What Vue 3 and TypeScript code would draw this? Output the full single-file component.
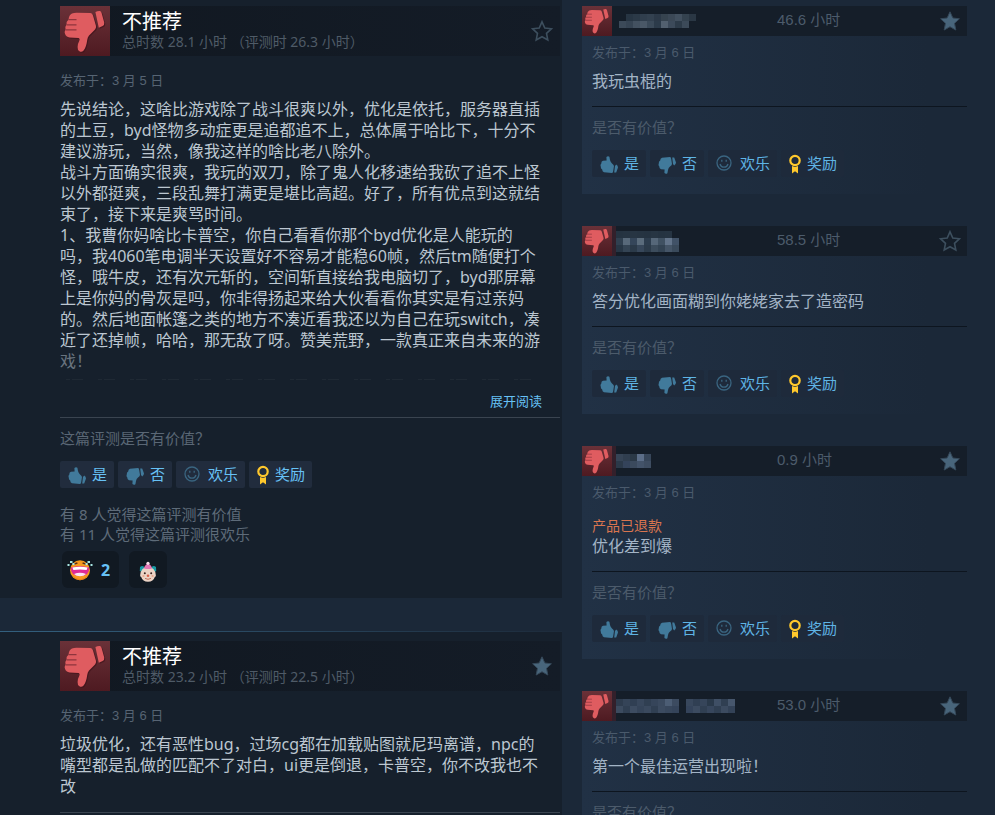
<script setup lang="ts">
interface Review {
  id: number
  hours: string
  date: string
  starred: boolean
  lines: string[]
  truncated: boolean
  votable: boolean
}

interface RecentReview {
  id: number
  hours: string
  starred: boolean
  refunded: boolean
  text: string
  cells: string[][]
  notched: boolean
  votable: boolean
}

const FIST =
  'M12 7.5 Q14 6.6 17 6.7 L30.5 7 Q32.4 7.2 33 9.5 L36 20 Q36.4 22 35 23.4 L29 29.5 Q27.6 31.2 27.2 34 C26.6 38.5 25.6 42 23.6 44.4 Q21.6 46.6 19.4 45.2 Q17.4 44 17.6 41 Q17.8 37.6 19.4 34.6 Q20.4 32.6 18.6 32 L9.4 31.4 Q6 31 5 27.8 Q4.2 25.4 5.6 23.4 Q4.8 20.4 6.6 18.4 Q6.4 15 8.6 13.4 Q8.8 9.2 12 7.5Z'
const CUFF = 'M35.4 6 Q38 4.6 40 5 Q41.2 5.4 41.6 7 L44.2 16.6 Q44.6 19 42.6 20 L38.8 21.8Z'
const GROOVES = 'M8.4 13.6 H16.5 M6.6 18.8 H16.5 M5.6 23.8 H16.5'
const STAR = 'M10 0.8 L12.8 7 L19.4 7.8 L14.5 12.3 L15.8 19 L10 15.7 L4.2 19 L5.5 12.3 L0.6 7.8 L7.2 7Z'
const THUMB =
  'M4 1.8 L12 1 Q13 1.2 13.2 3 L14 8 Q13.6 9.6 12 10.6 Q10.4 12 10 14 L9.4 17.2 Q8 18.400 6.400 17 L6.600 13.400 L3 13.200 Q1 12.600 1.400 10.400 Q0 9.400 0.800 7.400 Q0.600 5.400 2.200 4.600 Q2.200 2.400 4 1.800Z M14.200 1.600 L16.200 1.600 L18 6.600 Q18 8.400 16.200 9.400 L15 8Z'

const reviews: Review[] = [
  {
    id: 1,
    hours: '总时数 28.1 小时 （评测时 26.3 小时）',
    date: '发布于：3 月 5 日',
    starred: false,
    truncated: true,
    votable: true,
    lines: [
      '先说结论，这啥比游戏除了战斗很爽以外，优化是依托，服务器直插',
      '的土豆，byd怪物多动症更是追都追不上，总体属于哈比下，十分不',
      '建议游玩，当然，像我这样的啥比老八除外。',
      '战斗方面确实很爽，我玩的双刀，除了鬼人化移速给我砍了追不上怪',
      '以外都挺爽，三段乱舞打满更是堪比高超。好了，所有优点到这就结',
      '束了，接下来是爽骂时间。',
      '1、我曹你妈啥比卡普空，你自己看看你那个byd优化是人能玩的',
      '吗，我4060笔电调半天设置好不容易才能稳60帧，然后tm随便打个',
      '怪，哦牛皮，还有次元斩的，空间斩直接给我电脑切了，byd那屏幕',
      '上是你妈的骨灰是吗，你非得扬起来给大伙看看你其实是有过亲妈',
      '的。然后地面帐篷之类的地方不凑近看我还以为自己在玩switch，凑',
      '近了还掉帧，哈哈，那无敌了呀。赞美荒野，一款真正来自未来的游',
      '戏！',
    ],
  },
  {
    id: 2,
    hours: '总时数 23.2 小时 （评测时 22.5 小时）',
    date: '发布于：3 月 6 日',
    starred: true,
    truncated: false,
    votable: false,
    lines: [
      '垃圾优化，还有恶性bug，过场cg都在加载贴图就尼玛离谱，npc的',
      '嘴型都是乱做的匹配不了对白，ui更是倒退，卡普空，你不改我也不',
      '改',
    ],
  },
]

const recent: RecentReview[] = [
  {
    id: 1,
    hours: '46.6 小时',
    starred: true,
    refunded: false,
    text: '我玩虫棍的',
    notched: false,
    votable: true,
    cells: [
      ['', '#273543', '#2b3947', '#303e4d', '#334150', '#2c3948', '#36434f', '#3b4856', '#42505f', '#34424f', '#2a3744'],
      ['#3c4a59', '#364453', '#435160', '#4a5867', '#3b4a59', '#2c3b4a', '#52606f', '#3c4a5a', '#2d3b49', '#3c4a59', ''],
    ],
  },
  {
    id: 2,
    hours: '58.5 小时',
    starred: false,
    refunded: false,
    text: '答分优化画面糊到你姥姥家去了造密码',
    notched: true,
    votable: true,
    cells: [
      ['#253341', '#263442', '#273543', '#263442', '#253341', '#273543', '#253341', '#263442', ''],
      ['#304050', '#58697a', '#35465a', '#5b6c7c', '#2d3d4e', '#566779', '#405162', '#63748a', '#415267'],
      ['#273645', '#344454', '#2b3a49', '#37475a', '#2c3b4a', '#3c4c5c', '#334353', '#455567', '#3a4a5b'],
    ],
  },
  {
    id: 3,
    hours: '0.9 小时',
    starred: true,
    refunded: true,
    text: '优化差到爆',
    notched: true,
    votable: true,
    cells: [
      ['#364456', '#303e4f', '#2b3947', '#5c6e88', '#374659'],
      ['#2b3949', '#34435a', '#3b4a5d', '#435369', '#3e4d61'],
    ],
  },
  {
    id: 4,
    hours: '53.0 小时',
    starred: true,
    refunded: false,
    text: '第一个最佳运营出现啦！',
    notched: true,
    votable: false,
    cells: [
      ['#2e3c4e', '#354458', '#303f53', '#38475c', '#303f52', '#36455a', '#3b4a5f', '#4c5d74', '#3c4b60', '', '#38475c', '#303f53', '#36455a', '#2a394a', '#3f4f65', '#303f52', '#46566c'],
      ['#3c4b5f', '#303f52', '#3d4c61', '#354459', '#3a495e', '#303f52', '#3c4b60', '#38475c', '#35445a', '', '#34435a', '#3c4b60', '#303f52', '#37465c', '#303f52', '#3c4b60', '#334257'],
    ],
  },
]

const votes = [
  { key: 'up', label: '是' },
  { key: 'down', label: '否' },
  { key: 'funny', label: '欢乐' },
  { key: 'award', label: '奖励' },
]
</script>

<template>
  <main class="page">
    <section class="column">
      <article v-for="r in reviews" :key="r.id" class="review">
        <header class="review-head">
          <svg class="verdict" viewBox="0 0 50 50" aria-hidden="true">
            <g class="verdict-shadow"><path :d="FIST" /><path :d="CUFF" /></g>
            <path class="verdict-hand" :d="FIST" />
            <path class="verdict-hand" :d="CUFF" />
            <path class="verdict-groove" :d="GROOVES" />
          </svg>
          <div class="review-title">
            <h2>不推荐</h2>
            <p>{{ r.hours }}</p>
          </div>
          <svg class="star" :class="{ filled: r.starred }" viewBox="0 0 20 20" aria-hidden="true">
            <path :d="STAR" />
          </svg>
        </header>
        <p class="date">{{ r.date }}</p>
        <div class="text" :class="{ truncated: r.truncated }">
          <div v-for="(line, i) in r.lines" :key="i">{{ line }}</div>
        </div>
        <div v-if="r.truncated" class="expand"><a href="#">展开阅读</a></div>
        <div class="review-foot">
          <template v-if="r.votable">
            <p class="question">这篇评测是否有价值？</p>
            <div class="votes">
              <button v-for="v in votes" :key="v.key" type="button" :class="v.key">
                <svg v-if="v.key === 'up' || v.key === 'down'" class="thumb" viewBox="0 0 18 18" aria-hidden="true">
                  <path :d="THUMB" />
                </svg>
                <svg v-else-if="v.key === 'funny'" class="smile" viewBox="0 0 16 16" aria-hidden="true">
                  <circle cx="8" cy="8" r="7" />
                  <path d="M4 9 Q4.8 12.2 8 12.2 Q11.2 12.2 12 9" />
                  <path d="M5.8 4.8 V6.8 M10.2 4.8 V6.8" />
                </svg>
                <svg v-else class="ribbon" viewBox="0 0 12 20" aria-hidden="true">
                  <circle cx="6" cy="6.5" r="4.7" />
                  <path d="M3 12 L6 13 L9 12 V19.6 L6 17.2 L3 19.6Z" />
                </svg>
                <span>{{ v.label }}</span>
              </button>
            </div>
            <p class="counts">有 8 人觉得这篇评测有价值<br />有 11 人觉得这篇评测很欢乐</p>
            <div class="awards">
              <button type="button" class="award-chip">
                <svg class="laugh" viewBox="0 0 26 22" aria-hidden="true">
                  <circle cx="13" cy="11.2" r="10" fill="#f79a1e" />
                  <path d="M5 16 Q13 24 21 16 Q18.6 21.2 13 21.2 Q7.4 21.2 5 16Z" fill="#e8801a" />
                  <path d="M4 8.5 Q13 6.2 22 8.5 Q22.8 16.8 13 17.2 Q3.2 16.8 4 8.5Z" fill="#e02a95" />
                  <path d="M5.4 8.6 Q13 6.8 20.6 8.6 L19.6 11 Q13 9.8 6.4 11Z" fill="#fff" />
                  <path d="M7 15 Q13 12.4 19 15 Q17 17.2 13 17.2 Q9 17.2 7 15Z" fill="#fbe6f0" />
                  <path d="M7 5.2 L10.4 4 M19 5.2 L15.6 4" stroke="#5a2e14" stroke-width="1.4" />
                  <path
                    d="M3 2 h2.5 v2 h-2.5z M0.5 5 h2 v2 h-2z M5.5 4 h2 v2 h-2z M20.5 2 h2.5 v2 h-2.5z M23.5 5 h2 v2 h-2z M18.5 4 h2 v2 h-2z"
                    fill="#a8e6e2"
                  />
                </svg>
                <span>2</span>
              </button>
              <button type="button" class="award-chip">
                <svg class="clown" viewBox="0 0 18 22" aria-hidden="true">
                  <path
                    d="M1 6 Q4 3.5 6 7 L4 12 L0.8 10Z M17 6 Q14 3.5 12 7 L14 12 L17.2 10Z"
                    fill="#1a9aa5"
                  />
                  <path
                    d="M1.2 14 Q2 6 9 6 Q16 6 16.8 14 Q17.4 15.4 15.8 16 Q14.4 20.8 9 20.8 Q3.6 20.8 2.2 16 Q0.6 15.4 1.2 14Z"
                    fill="#ecd3c5"
                  />
                  <path d="M5 7.4 Q6 3.4 9 2.8 Q12 3.4 13 7.4 Q9 8.4 5 7.4Z" fill="#e477b5" />
                  <circle cx="9" cy="2.3" r="1.6" fill="#f7dce8" />
                  <circle cx="5.8" cy="12.2" r="1" fill="#3a2320" />
                  <circle cx="12.2" cy="12.2" r="1" fill="#3a2320" />
                  <circle cx="9" cy="14.8" r="1.3" fill="#d9604a" />
                  <path d="M6 17.4 Q9 19.2 12 17.4" stroke="#c0705c" fill="none" />
                  <circle cx="4.4" cy="15" r="1.1" fill="#e8a68c" />
                  <circle cx="13.6" cy="15" r="1.1" fill="#e8a68c" />
                </svg>
              </button>
            </div>
          </template>
        </div>
      </article>
    </section>

    <aside class="recent">
      <article v-for="r in recent" :key="r.id" class="short">
        <header class="short-head">
          <svg class="verdict" viewBox="0 0 50 50" aria-hidden="true">
            <path class="verdict-hand" :d="FIST" />
            <path class="verdict-hand" :d="CUFF" />
            <path class="verdict-groove" :d="GROOVES" />
          </svg>
          <div class="author" :class="{ notched: r.notched }">
            <svg :width="r.cells[0].length * 7" :height="r.cells.length * 7" shape-rendering="crispEdges" aria-hidden="true">
              <template v-for="(row, y) in r.cells" :key="y">
                <rect v-for="(c, x) in row" :key="x" :x="x * 7" :y="y * 7" width="7" height="7" :fill="c || 'none'" />
              </template>
            </svg>
          </div>
          <span class="short-hours">{{ r.hours }}</span>
          <svg class="star" :class="{ filled: r.starred }" viewBox="0 0 20 20" aria-hidden="true">
            <path :d="STAR" />
          </svg>
        </header>
        <div class="short-body">
          <p class="date">发布于：3 月 6 日</p>
          <p v-if="r.refunded" class="refunded">产品已退款</p>
          <p class="short-text">{{ r.text }}</p>
          <div class="short-foot">
            <p class="question">是否有价值？</p>
            <div v-if="r.votable" class="votes">
              <button v-for="v in votes" :key="v.key" type="button" :class="v.key">
                <svg v-if="v.key === 'up' || v.key === 'down'" class="thumb" viewBox="0 0 18 18" aria-hidden="true">
                  <path :d="THUMB" />
                </svg>
                <svg v-else-if="v.key === 'funny'" class="smile" viewBox="0 0 16 16" aria-hidden="true">
                  <circle cx="8" cy="8" r="7" />
                  <path d="M4 9 Q4.8 12.2 8 12.2 Q11.2 12.2 12 9" />
                  <path d="M5.8 4.8 V6.8 M10.2 4.8 V6.8" />
                </svg>
                <svg v-else class="ribbon" viewBox="0 0 12 20" aria-hidden="true">
                  <circle cx="6" cy="6.5" r="4.7" />
                  <path d="M3 12 L6 13 L9 12 V19.6 L6 17.2 L3 19.6Z" />
                </svg>
                <span>{{ v.label }}</span>
              </button>
            </div>
          </div>
        </div>
      </article>
    </aside>
  </main>
</template>

<style>
body {
  background: #1b2838;
}
</style>

<style scoped>
.page {
  display: grid;
  grid-template-columns: minmax(0, 562fr) minmax(0, 385fr);
  column-gap: 20px;
  padding-right: 28px;
  height: 100vh;
  overflow: hidden;
  box-sizing: border-box;
  background: #1b2838;
  color: #c1ccd6;
  font-family: 'Noto Sans', 'Noto Sans CJK SC', sans-serif;
}

h2,
p {
  margin: 0;
  font-weight: inherit;
}

svg {
  display: block;
  flex: none;
}

.column {
  display: flex;
  flex-direction: column;
  gap: 33px;
}

.review {
  flex: none;
  padding: 6px 2px 10px 60px;
  background: #16202c;
}

.review + .review {
  padding-top: 9px;
  border-top: 1px solid transparent;
  background:
    linear-gradient(#16202c, #16202c) padding-box,
    linear-gradient(to right, #33607f, #1d2b3b) border-box;
}

.review-head {
  display: flex;
  align-items: center;
  height: 50px;
  padding-right: 8px;
  background: linear-gradient(to right, #111821, #141c27);
}

.verdict {
  width: 50px;
  height: 50px;
  background: linear-gradient(#6a3138, #4e1a21);
}

.verdict-hand {
  fill: #df5c60;
}

.verdict-shadow {
  fill: #3c1119;
  opacity: 0.6;
  transform: translate(1px, 1px);
}

.verdict-groove {
  fill: none;
  stroke: #8e353d;
  stroke-width: 1.2;
}

.review-title {
  flex: 1;
  padding-left: 12px;
}

.review-title h2 {
  font-size: 20px;
  line-height: 22px;
  color: #fff;
}

.review-title p {
  font-size: 14px;
  line-height: 18px;
  color: #4f5b67;
}

.star {
  width: 20px;
  height: 20px;
  fill: none;
  stroke: #3d4f5e;
  stroke-width: 1.6;
  overflow: visible;
}

.star.filled {
  fill: #48657b;
  stroke: #36495a;
  stroke-width: 1;
}

.date {
  margin-top: 17px;
  font-family: 'Liberation Sans', 'Noto Sans CJK SC', sans-serif;
  font-size: 13px;
  line-height: 16px;
  color: #566473;
}

.text {
  margin-top: 10px;
  font-size: 16px;
  line-height: 21px;
  white-space: nowrap;
  color: #bcc7d1;
}

.text.truncated div:last-child {
  opacity: 0.5;
}

.expand {
  margin-top: 7px;
  padding: 0 18px 7px 0;
  text-align: right;
  font-size: 13px;
  line-height: 18px;
}

.expand::before {
  content: '';
  display: block;
  height: 1px;
  margin-bottom: 12px;
  background: repeating-linear-gradient(to right, transparent 0 6px, #1f2934 6px 10px, transparent 10px 12px, #1f2934 12px 23px, transparent 23px 32px);
}

.expand a {
  color: #67c1f5;
  text-decoration: none;
}

.text + .review-foot {
  margin-top: 15px;
}

.review-foot {
  border-top: 1px solid #3a4450;
}

.question {
  margin-top: 10px;
  font-size: 15px;
  line-height: 20px;
  color: #5a6775;
}

.votes {
  display: flex;
  gap: 4px;
  margin-top: 13px;
}

.votes button {
  display: flex;
  align-items: center;
  gap: 6px;
  height: 27px;
  padding: 0 7px 1px 8px;
  border: 0;
  border-radius: 2px;
  background: #212c3d;
  color: #67c1f5;
  font-family: inherit;
  font-size: 15px;
  line-height: 20px;
}

.thumb {
  width: 18px;
  height: 18px;
  margin-top: 3px;
  fill: #417a9b;
}

.up .thumb {
  transform: scaleY(-1);
}

.votes .funny {
  gap: 8px;
}

.smile {
  width: 16px;
  height: 16px;
  fill: none;
  stroke: #3a6580;
  stroke-width: 1.3;
}

.ribbon {
  width: 12px;
  height: 20px;
  margin-top: 2px;
  fill: #ffc82c;
}

.ribbon circle {
  fill: none;
  stroke: #ffc82c;
  stroke-width: 2.2;
}

.counts {
  margin-top: 16px;
  font-size: 15px;
  line-height: 20px;
  color: #5e6b79;
}

.awards {
  display: flex;
  gap: 10px;
  margin-top: 7px;
  padding-left: 2px;
}

.award-chip {
  display: flex;
  align-items: center;
  gap: 8px;
  height: 37px;
  padding: 0 9px 0 5px;
  border: 0;
  border-radius: 6px;
  background: #111922;
  color: #67c1f5;
  font-family: inherit;
  font-size: 16px;
  font-weight: 700;
}

.laugh {
  width: 26px;
  height: 22px;
}

.clown {
  width: 18px;
  height: 22px;
  margin: 4px 1px 0 5px;
}

.recent {
  display: flex;
  flex-direction: column;
  gap: 32px;
  padding-top: 6px;
}

.short {
  flex: none;
  background: linear-gradient(to right, #213145, #1b2838 90%);
}

.short-head {
  display: grid;
  grid-template-columns: 30px 165px 1fr auto;
  align-items: center;
  height: 30px;
  padding-right: 7px;
  background: #151e29;
}

.short-head .verdict {
  width: 30px;
  height: 30px;
}

.author {
  display: flex;
  align-items: center;
  height: 30px;
  padding-left: 7px;
  box-sizing: border-box;
}

.author.notched {
  padding-left: 0;
  border-left: 4px solid #33202b;
}

.short-hours {
  font-family: 'Liberation Sans', 'Noto Sans CJK SC', sans-serif;
  font-size: 15px;
  line-height: 20px;
  padding-bottom: 2px;
  color: #4c5b6b;
}

.short-body {
  padding: 9px 0 17px 10px;
}

.short-body .date {
  margin-top: 0;
  color: #4a5a6c;
}

.refunded {
  margin-top: 15px;
  font-size: 14px;
  line-height: 20px;
  color: #d9754f;
}

.short-text {
  margin-top: 10px;
  font-size: 16px;
  line-height: 21px;
  color: #a3b4c6;
}

.refunded + .short-text {
  margin-top: 0;
}

.short-foot {
  margin-top: 14px;
  border-top: 1px solid #0d151f;
}

.short-foot .question {
  color: #4c5b6b;
}

.short-foot .votes button {
  background: #1e2a3b;
  color: #5fb4e5;
}
</style>
